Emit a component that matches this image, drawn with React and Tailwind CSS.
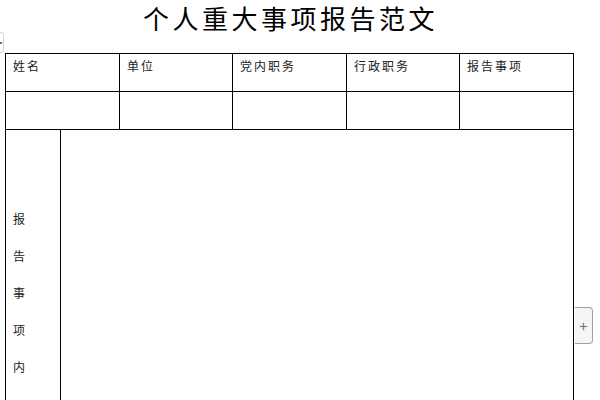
import React from "react";

const heads = ["姓名", "单位", "党内职务", "行政职务", "报告事项"];
const widths = ["w-[114px]", "w-[113px]", "w-[114px]", "w-[113px]", "w-[114px]"];

export default function App() {
  return (
    <div
      className="relative w-[600px] h-[400px] overflow-hidden bg-white text-black"
      style={{ fontFamily: '"Noto Sans CJK SC", "Noto Sans", sans-serif' }}
    >
      {/* title */}
      <div className="w-[578px] h-[53px] flex justify-center pt-[1px]">
        <div className="text-[26px] leading-[34px] tracking-[3.5px] pl-[3px]">
          个人重大事项报告范文
        </div>
      </div>

      {/* table move handle */}
      <div className="absolute left-[-12px] top-[32px] w-[16px] h-[21px] border border-gray-300 rounded-[3px] bg-white flex items-center justify-end pr-[1px]">
        <div className="w-[2px] h-[2px] bg-gray-500" />
      </div>

      {/* table */}
      <div className="ml-[5px] w-[569px] border-l border-t border-black">
        <div className="flex">
          {heads.map((h, i) => (
            <div
              key={h}
              className={`${widths[i]} h-[38px] border-r border-b border-black pl-[7px] pt-[4px] text-[12px] leading-[16px] tracking-[2px] text-[#222]`}
            >
              {h}
            </div>
          ))}
        </div>
        <div className="flex">
          {widths.map((w, i) => (
            <div key={i} className={`${w} h-[38px] border-r border-b border-black`} />
          ))}
        </div>
        <div className="flex h-[300px]">
          <div className="w-[55px] border-r border-black pl-[7px] pt-[70px] text-[12px] leading-[37px] text-[#222] flex flex-col">
            <span>报</span>
            <span>告</span>
            <span>事</span>
            <span>项</span>
            <span>内</span>
          </div>
          <div className="w-[513px] border-r border-black" />
        </div>
      </div>

      {/* add column button */}
      <div className="absolute left-[575px] top-[307px] w-[18px] h-[37px] border border-l-0 border-gray-400 rounded-r-[4px] bg-[#f5f5f5] flex items-center justify-center text-gray-500 text-[15px] leading-none">
        +
      </div>
    </div>
  );
}
